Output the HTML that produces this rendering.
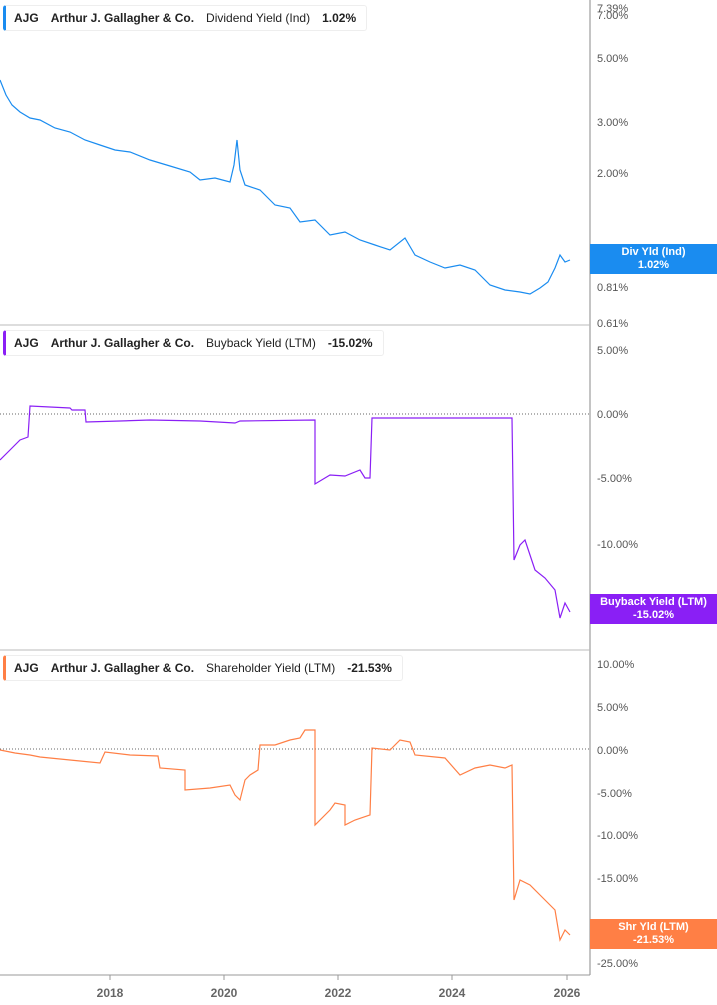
<!DOCTYPE html><html><head><style>
body{margin:0;width:717px;height:1005px;background:#fff;font-family:"Liberation Sans",sans-serif;overflow:hidden;position:relative}
.lg{position:absolute;left:3px;height:24px;border:1px solid #eee;border-left:3px solid;border-radius:3px;background:#fff;font-size:12px;font-weight:bold;color:#222;line-height:24px;padding:0 10px 0 8px;white-space:nowrap}
.lg span{margin-right:12px}.lg .n{font-weight:normal}
.tag{position:absolute;left:590px;width:127px;color:#fff;font-size:11px;font-weight:bold;text-align:center;line-height:13px;padding:2px 0}
</style></head><body>
<svg width="717" height="1005" style="position:absolute;left:0;top:0" font-family="Liberation Sans" font-size="11" fill="#555">
<line x1="590" y1="0" x2="590" y2="975" stroke="#888"/>
<line x1="0" y1="325" x2="590" y2="325" stroke="#bbb"/>
<line x1="0" y1="650" x2="590" y2="650" stroke="#bbb"/>
<line x1="0" y1="975" x2="590" y2="975" stroke="#999"/>
<line x1="0" y1="414" x2="590" y2="414" stroke="#666" stroke-dasharray="1,2"/>
<line x1="0" y1="749" x2="590" y2="749" stroke="#666" stroke-dasharray="1,2"/>
<g>
<text x="597" y="12">7.39%</text><text x="597" y="19">7.00%</text><text x="597" y="62">5.00%</text><text x="597" y="126">3.00%</text><text x="597" y="177">2.00%</text><text x="597" y="291">0.81%</text><text x="597" y="327">0.61%</text>
<text x="597" y="354">5.00%</text><text x="597" y="418">0.00%</text><text x="597" y="482">-5.00%</text><text x="597" y="548">-10.00%</text>
<text x="597" y="668">10.00%</text><text x="597" y="711">5.00%</text><text x="597" y="754">0.00%</text><text x="597" y="797">-5.00%</text><text x="597" y="839">-10.00%</text><text x="597" y="882">-15.00%</text><text x="597" y="967">-25.00%</text>
</g>
<g font-weight="bold" font-size="12" fill="#666" text-anchor="middle">
<text x="110" y="997">2018</text><text x="224" y="997">2020</text><text x="338" y="997">2022</text><text x="452" y="997">2024</text><text x="567" y="997">2026</text></g>
<g stroke="#999"><line x1="110" y1="975" x2="110" y2="980"/><line x1="224" y1="975" x2="224" y2="980"/><line x1="338" y1="975" x2="338" y2="980"/><line x1="452" y1="975" x2="452" y2="980"/><line x1="567" y1="975" x2="567" y2="980"/></g>
<polyline fill="none" stroke="#1a8cf0" stroke-width="1.2" points="0,80 6,95 12,105 20,112 30,118 40,120 55,128 70,132 85,140 100,145 115,150 130,152 150,160 170,166 190,172 200,180 215,178 230,182 234,165 237,140 240,170 245,185 260,190 275,205 290,208 300,222 315,220 330,235 345,232 360,240 375,245 390,250 405,238 415,255 430,262 445,268 460,265 475,270 490,285 505,290 520,292 530,294 540,288 548,282 555,268 560,255 565,262 570,260"/>
<polyline fill="none" stroke="#8a1ff5" stroke-width="1.2" points="0,460 10,450 20,440 28,437 30,406 70,408 72,410 85,410 86,422 120,421 150,420 200,421 235,423 240,421 315,420 315,484 330,475 345,476 360,470 365,478 370,478 372,418 512,418 514,560 520,545 525,540 530,555 535,570 545,578 555,590 560,618 565,603 570,612"/>
<polyline fill="none" stroke="#ff7f45" stroke-width="1.2" points="0,750 15,753 30,755 40,757 70,760 100,763 105,752 130,755 158,756 160,768 185,770 185,790 210,788 230,785 235,795 240,800 245,780 250,775 258,770 260,745 275,745 290,740 300,738 305,730 315,730 315,825 330,810 335,803 345,805 345,825 355,820 370,815 372,748 390,750 400,740 410,742 415,755 445,758 460,775 475,768 490,765 505,768 512,765 514,900 520,880 530,885 540,895 550,905 555,910 560,940 565,930 570,935"/>
</svg>
<div class="lg" style="top:5px;border-left-color:#1a8cf0"><span>AJG</span><span>Arthur J. Gallagher &amp; Co.</span><span class="n">Dividend Yield (Ind)</span>1.02%</div>
<div class="lg" style="top:330px;border-left-color:#8a1ff5"><span>AJG</span><span>Arthur J. Gallagher &amp; Co.</span><span class="n">Buyback Yield (LTM)</span>-15.02%</div>
<div class="lg" style="top:655px;border-left-color:#ff7f45"><span>AJG</span><span>Arthur J. Gallagher &amp; Co.</span><span class="n">Shareholder Yield (LTM)</span>-21.53%</div>
<div class="tag" style="top:244px;background:#1a8cf0">Div Yld (Ind)<br>1.02%</div>
<div class="tag" style="top:594px;background:#8a1ff5">Buyback Yield (LTM)<br>-15.02%</div>
<div class="tag" style="top:919px;background:#ff7f45">Shr Yld (LTM)<br>-21.53%</div>
</body></html>
